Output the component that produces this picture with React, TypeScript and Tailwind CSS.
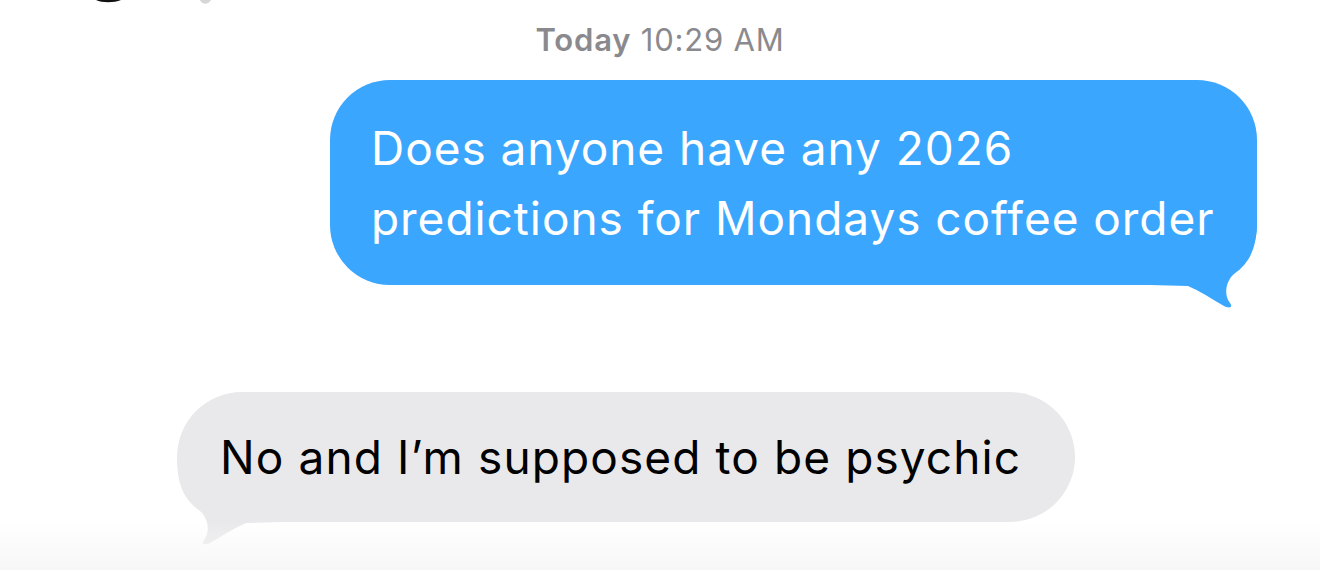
import React from "react";

const font = { fontFamily: "Inter, 'Noto Sans', 'Liberation Sans', sans-serif" };

function Tail({ color, className }: { color: string; className: string }) {
  return (
    <svg className={className} width="112" height="110" viewBox="0 0 112 110" fill={color}>
      <path d="M0 85 L0 20 L107 20 C107 46 101 62 84 74 C75 82 74 96 80 103 C83 107 80 109 74 106 C62 99 50 91 38 86 Z" />
    </svg>
  );
}

export default function App() {
  return (
    <div className="relative w-[1320px] h-[570px] overflow-hidden bg-white" style={font}>
      <svg className="absolute left-[94px] top-0" width="30" height="4" viewBox="0 0 30 4">
        <path d="M2 0 C8 3 20 3 27 0 Z" fill="#111" />
      </svg>
      <svg className="absolute left-[198px] top-0" width="16" height="6" viewBox="0 0 16 6">
        <path d="M2 0 C4 5 10 5 13 0 Z" fill="#d6d6d6" />
      </svg>

      <div className="flex flex-col">
        <div className="pt-[20px] h-[80px] text-center text-[31px] leading-[40px] text-[#8a8a8e] tracking-[0.8px]">
          <span className="font-semibold">Today</span> 10:29 AM
        </div>

        <div className="flex justify-end pr-[63px]">
          <div className="relative w-[927px] h-[205px] rounded-[60px] bg-[#3aa6fd]">
            <Tail color="#3aa6fd" className="absolute left-[820px] top-[120px]" />
            <div className="relative pl-[41px] pt-[33px] text-[46px] leading-[70px] text-white tracking-[0.95px]">
              Does anyone have any 2026
              <br />
              predictions for Mondays coffee order
            </div>
          </div>
        </div>

        <div className="flex pl-[177px] pt-[107px]">
          <div className="relative w-[898px] h-[130px] rounded-[65px] bg-[#e9e9eb]">
            <Tail color="#e9e9eb" className="absolute left-[-5px] top-[45px] -scale-x-100" />
            <div className="relative pl-[43px] pt-[30px] text-[46px] leading-[70px] text-black tracking-[1.1px]">
              No and I’m supposed to be psychic
            </div>
          </div>
        </div>
      </div>

      <div className="pointer-events-none absolute left-0 right-0 bottom-0 h-[48px] bg-gradient-to-b from-[#ffffff00] to-[#f7f7f7]" />
    </div>
  );
}
